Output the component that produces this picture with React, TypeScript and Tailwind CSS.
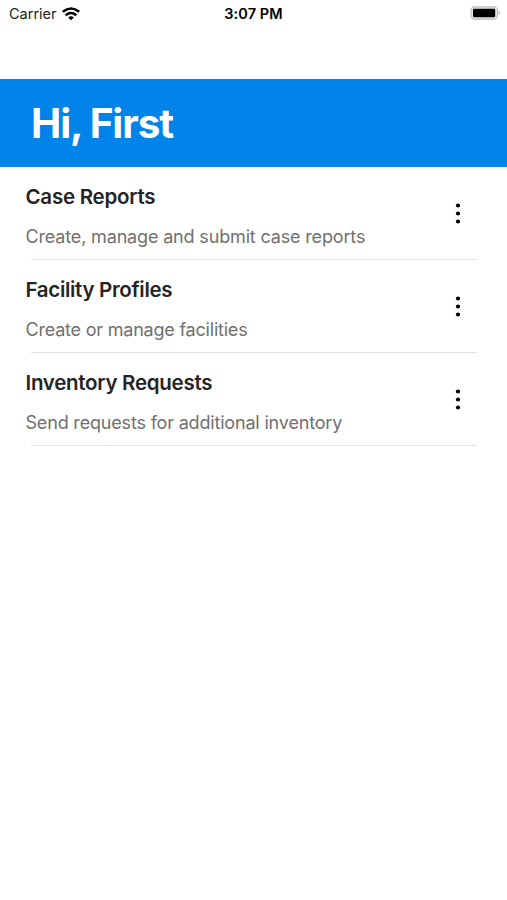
const rows = [
  { title: 'Case Reports', text: 'Create, manage and submit case reports', titleTracking: 'tracking-[-0.25px]', textTracking: 'tracking-[-0.16px]' },
  { title: 'Facility Profiles', text: 'Create or manage facilities', titleTracking: 'tracking-[-0.31px]', textTracking: 'tracking-[-0.21px]' },
  { title: 'Inventory Requests', text: 'Send requests for additional inventory', titleTracking: 'tracking-[-0.28px]', textTracking: 'tracking-[-0.18px]' },
];

function WifiIcon() {
  return (
    <svg width="18" height="14" viewBox="0 0 18 14" fill="none" stroke="#000" strokeWidth="2.5">
      <path d="M.8 4.8Q9-1.9 17.2 4.8M3.7 8.2Q9 3.9 14.3 8.2" />
      <path d="M6.2 10.4Q9 8.3 11.8 10.4L9 13.2Z" fill="#000" stroke="none" />
    </svg>
  );
}

function BatteryIcon() {
  return (
    <svg width="31" height="14" viewBox="0 0 31 14">
      <rect x="1" y=".9" width="26.4" height="12.2" rx="3.6" fill="#e8e8e8" stroke="#bdbdbd" strokeWidth="1.1" />
      <rect x="3" y="2.7" width="22.2" height="8.6" rx="1.4" />
      <path d="M28.6 4.8Q31 7 28.6 9.2Z" fill="#aaa" />
    </svg>
  );
}

function MoreIcon() {
  return (
    <svg width="6" height="21" viewBox="0 0 6 21">
      <circle cx="3" cy="2.5" r="2.1" />
      <circle cx="3" cy="10.5" r="2.1" />
      <circle cx="3" cy="18.5" r="2.1" />
    </svg>
  );
}

export default function App() {
  return (
    <main className="flex h-[900px] w-full flex-col bg-white font-['Inter','Liberation_Sans',sans-serif]">
      <header className="flex h-[79px] items-start justify-between pl-[9px] pr-[6px] pt-1">
        <div className="flex flex-1 items-center gap-[5px] text-[14.5px] leading-5 text-[#222]">
          <span>Carrier</span>
          <WifiIcon />
        </div>
        <div className="pr-[3px] text-[14.5px] font-semibold leading-5 tracking-[0.1px] text-black">3:07 PM</div>
        <div className="flex flex-1 justify-end pt-0.5">
          <BatteryIcon />
        </div>
      </header>
      <section className="flex h-[88px] items-center bg-[#0084e9] pl-[31px] pt-0.5 text-white">
        <h1 className="whitespace-nowrap text-[40.5px] font-bold leading-none tracking-[-1.1px]">Hi, First</h1>
      </section>
      <ul>
        {rows.map((row) => (
          <li key={row.title} className="flex h-[93px] flex-col">
            <div className="flex flex-1 items-start justify-between pl-[25.5px] pr-[46px]">
              <div className="flex flex-col gap-4 whitespace-nowrap pt-[18px]">
                <h2 className={`text-[20.5px] font-semibold leading-6 text-[#242424] ${row.titleTracking}`}>{row.title}</h2>
                <p className={`text-[18px] leading-6 text-[#707070] ${row.textTracking}`}>{row.text}</p>
              </div>
              <div className="pt-9">
                <MoreIcon />
              </div>
            </div>
            <div className="ml-[31px] mr-[30px] h-px bg-[#e2e2e2]" />
          </li>
        ))}
      </ul>
    </main>
  );
}
